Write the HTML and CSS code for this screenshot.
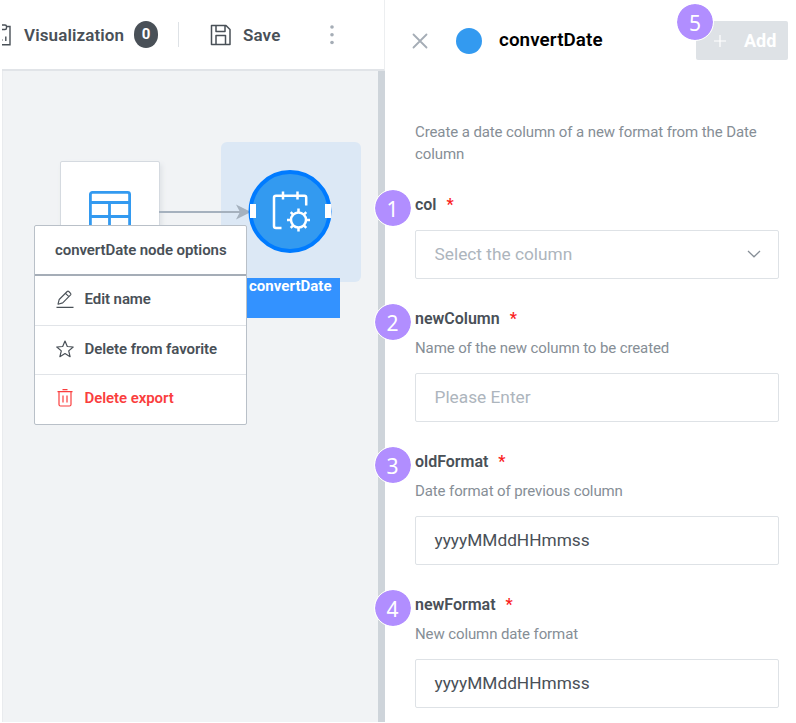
FILE: index.html
```html
<!DOCTYPE html>
<html lang="en">
<head>
<meta charset="utf-8">
<title>convertDate</title>
<link rel="stylesheet" href="styles.css">
</head>
<body>
<div class="app">
  <section class="workspace">
    <header class="toolbar">
      <svg class="icon-viz" width="9" height="24" viewBox="0 0 9 24" fill="none" stroke="#495057" stroke-width="1.4"><path d="M-3 2H3Q4.500 2 4.500 3.500V5Q4.500 6.500 3 6.500H-3M4.500 3.500H8V21.800H-6M-.3 18V16M3.800 18V13.500"/></svg>
      <span class="viz-label">Visualization</span>
      <span class="count">0</span>
      <span class="divider"></span>
      <svg class="icon-save" width="22" height="22" viewBox="0 0 22 22" fill="none" stroke="#495057" stroke-width="1.5" stroke-linejoin="round"><path d="M1.500 1.500H16L20 5.500V20.500H1.500ZM6 1.500V7.500H15V1.500M6 20.500V11.500H15.500V20.500"/></svg>
      <span class="save-label">Save</span>
      <svg class="icon-more" width="6" height="20" viewBox="0 0 6 20" fill="#a5adb6"><circle cx="3" cy="2" r="1.800"/><circle cx="3" cy="9.700" r="1.800"/><circle cx="3" cy="17.500" r="1.800"/></svg>
    </header>
    <div class="canvas">
      <div class="selection"></div>
      <div class="node-table">
        <svg width="42" height="42" viewBox="0 0 42 42" fill="none" stroke="#339af0" stroke-width="2.800"><rect x="1.400" y="1.400" width="39.200" height="39.200" rx="2"/><path d="M1 11.500H41M1 25.500H41M20.500 11.500V41"/></svg>
      </div>
      <svg class="edge" width="96" height="18" viewBox="0 0 96 18"><path d="M0 9H84" stroke="#a5b1be" stroke-width="2.200"/><path d="M77 1.500L92 9L77 16.500L81 9Z" fill="#a5b1be"/></svg>
      <div class="node-convert">
        <svg width="84" height="84" viewBox="0 0 84 84" fill="none"><circle cx="42" cy="41.500" r="39.500" fill="#339af0" stroke="#007bff" stroke-width="4"/><g stroke="#fff" stroke-width="2.500"><path d="M33.500 58H28Q26 58 26 56.300V27.500Q26 25.800 28 25.800H56.500Q58.200 25.800 58.200 27.500V35.500M35 21.500V29.500M49.500 21.500V29.500"/><circle cx="50.500" cy="50" r="7.500"/><path d="M50.500 42.500V38.500M50.500 57.500V61.500M43 50H39M58 50H62M45.200 44.700L42.700 42.200M55.800 44.700L58.300 42.200M45.200 55.300L42.700 57.800M55.800 55.300L58.300 57.800"/></g></svg>
        <span class="port port-in"></span>
        <span class="port port-out"></span>
      </div>
      <div class="node-name">convertDate</div>
      <div class="menu">
        <div class="menu-title">convertDate node options</div>
        <div class="menu-item">
          <svg width="18" height="18" viewBox="0 0 18 18" fill="none" stroke="#495057" stroke-width="1.100" stroke-linejoin="round"><path d="M.5 17.400H17.500M2 14.200L3.200 9.500L11.200 1.500Q12 .8 12.800 1.500L14.600 3.300Q15.300 4.100 14.600 4.900L6.700 12.900ZM9.500 3.300L12.900 6.700"/></svg>
          <span>Edit name</span>
        </div>
        <div class="menu-item">
          <svg width="18" height="18" viewBox="0 0 18 18" fill="none" stroke="#495057" stroke-width="1.200" stroke-linejoin="round"><path d="M9 1L11.300 6.500L17.200 7L12.700 10.900L14.100 16.700L9 13.600L3.900 16.700L5.300 10.900L.8 7L6.700 6.500Z"/></svg>
          <span>Delete from favorite</span>
        </div>
        <div class="menu-item danger">
          <svg width="18" height="18" viewBox="0 0 18 18" fill="none" stroke="#fa3e3e" stroke-width="1.200"><path d="M1.500 2.700H16.500M6.500 .6H11.500M3 2.700V15.500Q3 17 4.500 17H13.500Q15 17 15 15.500V2.700M7 6.500V13.500M11 6.500V13.500"/></svg>
          <span>Delete export</span>
        </div>
      </div>
    </div>
  </section>
  <aside class="panel">
    <header class="panel-head">
      <svg class="close" width="16" height="16" viewBox="0 0 16 16" stroke="#a5adb6" stroke-width="1.800" stroke-linecap="round"><path d="M1.500 1.500L14.500 14.500M14.500 1.500L1.500 14.500"/></svg>
      <span class="dot"></span>
      <h1>convertDate</h1>
      <div class="add">
        <svg width="12" height="12" viewBox="0 0 12 12" stroke="#fff" stroke-width="1.200"><path d="M6 0V12M0 6H12"/></svg>
        <span>Add</span>
        <b class="step step-add">5</b>
      </div>
    </header>
    <p class="intro">Create a date column of a new format from the Date column</p>
    <div class="field first">
      <div class="label"><span>col</span><i>*</i></div>
      <div class="input placeholder"><span>Select the column</span>
        <svg width="14" height="8" viewBox="0 0 14 8" fill="none" stroke="#868e96" stroke-width="1.300"><path d="M1 1L7 6.800L13 1"/></svg>
      </div>
      <b class="step">1</b>
    </div>
    <div class="field">
      <div class="label"><span>newColumn</span><i>*</i></div>
      <p class="hint">Name of the new column to be created</p>
      <div class="input placeholder">Please Enter</div>
      <b class="step">2</b>
    </div>
    <div class="field">
      <div class="label"><span>oldFormat</span><i>*</i></div>
      <p class="hint">Date format of previous column</p>
      <div class="input">yyyyMMddHHmmss</div>
      <b class="step">3</b>
    </div>
    <div class="field">
      <div class="label"><span>newFormat</span><i>*</i></div>
      <p class="hint">New column date format</p>
      <div class="input">yyyyMMddHHmmss</div>
      <b class="step">4</b>
    </div>
  </aside>
</div>
</body>
</html>
```
FILE: styles.css
```css
* { box-sizing: border-box; }
body { margin: 0; background: #fff; font-family: Roboto, "Liberation Sans", sans-serif; color: #495057; }
svg { display: block; flex: none; }
.app { display: flex; width: 796px; height: 723px; overflow: hidden; }
.workspace { width: 385px; padding-left: 2px; padding-bottom: 1px; display: flex; flex-direction: column; flex: none; }
.toolbar { height: 71px; border-bottom: 2px solid #e1e4e8; border-right: 1px solid #eceef0; display: flex; align-items: center; flex: none; font-weight: 600; font-size: 17px; line-height: 24px; letter-spacing: .12px; color: #495057; }
.viz-label { margin-left: 13px; width: 101px; white-space: nowrap; }
.count { width: 24px; height: 27px; margin-left: 9px; border-radius: 12px / 13px; background: #495057; color: #fff; text-align: center; line-height: 27px; font-size: 15px; font-weight: 700; }
.divider { width: 1px; height: 25px; margin-left: 20px; background: #dee2e6; }
.icon-save { margin-left: 31px; }
.save-label { margin-left: 11px; width: 38px; }
.icon-more { margin-left: 48px; }
.canvas { flex: 1; position: relative; overflow: hidden; background: #f1f3f5; border-left: 1px solid #e9ebee; border-right: 7px solid #ced4da; }
.selection { position: absolute; left: 218px; top: 71px; width: 140px; height: 140px; border-radius: 6px; background: #dce8f5; }
.node-table { position: absolute; left: 57px; top: 90px; width: 100px; height: 100px; padding: 29px 28px; background: #fff; border: 1px solid #d5dae0; border-radius: 2px; box-shadow: 2px 3px 5px #dfe2e6; }
.edge { position: absolute; left: 156px; top: 132px; }
.node-convert { position: absolute; left: 245px; top: 99px; width: 84px; height: 84px; }
.port { position: absolute; top: 34px; width: 6px; height: 14px; background: #fff; }
.port-in { left: 2px; }
.port-out { right: 1px; }
.node-name { position: absolute; left: 242px; top: 207px; width: 95px; height: 40px; padding-left: 4px; background: #3392ff; color: #fff; font-weight: 700; font-size: 15px; line-height: 16px; letter-spacing: .04px; }
.menu { position: absolute; left: 31px; top: 154px; width: 213px; height: 200px; background: #fff; border: 1px solid #b9c0c8; border-radius: 2px; font-size: 15px; font-weight: 600; letter-spacing: -.07px; color: #495057; }
.menu-title { height: 50px; padding-left: 20px; line-height: 49px; border-bottom: 2px solid #a5adb7; white-space: nowrap; }
.menu-item { height: 49.500px; padding: 0 0 2px 21px; display: flex; align-items: center; gap: 10.500px; border-bottom: 1px solid #e1e4e8; white-space: nowrap; }
.menu-item.danger { height: 48px; color: #fa3e3e; border-bottom: 0; }
.panel { flex: 1; padding: 0 17px 0 30px; }
.panel-head { height: 121px; display: flex; align-items: flex-start; margin-right: -9px; }
.close { margin: 33px 0 0 -3px; }
.dot { width: 26px; height: 26px; margin: 28px 0 0 28px; border-radius: 50%; background: #339af0; }
h1 { margin: 28px 0 0 17px; font-size: 18.800px; line-height: 24px; letter-spacing: .1px; font-weight: 600; color: #000; width: 105px; }
.add { position: relative; margin: 21px 0 0 auto; width: 92px; height: 39px; border-radius: 2px; background: #dee2e6; color: #fff; display: flex; align-items: center; padding-left: 18px; gap: 18px; font-size: 18px; font-weight: 700; }
.intro { margin: 0; font-size: 15px; line-height: 22px; letter-spacing: -.1px; color: #868e96; }
.field { position: relative; height: 143px; }
.field.first { height: 114px; margin-top: 30px; }
.label { height: 20px; font-size: 16px; line-height: 19px; font-weight: 600; letter-spacing: -.02px; color: #495057; display: flex; gap: 10px; }
.label i { font-style: normal; color: #fa1e1e; }
.hint { margin: 9px 0 0; font-size: 15px; line-height: 20px; letter-spacing: -.11px; color: #868e96; }
.input { height: 49px; margin-top: 15px; border: 1px solid #dee2e6; border-radius: 2px; padding: 0 17px 1px 18.500px; display: flex; align-items: center; justify-content: space-between; font-size: 17.300px; color: #495057; }
.placeholder { color: #adb5bd; }
.step { position: absolute; left: -41.500px; top: -6px; width: 38px; height: 38px; border: 1px solid #fff; border-radius: 50%; background: #b18eff; background-clip: padding-box; color: #fff; text-align: center; font: 400 21px/38px "Noto Sans", sans-serif; }
.step-add { left: -20px; top: -18px; }
```
